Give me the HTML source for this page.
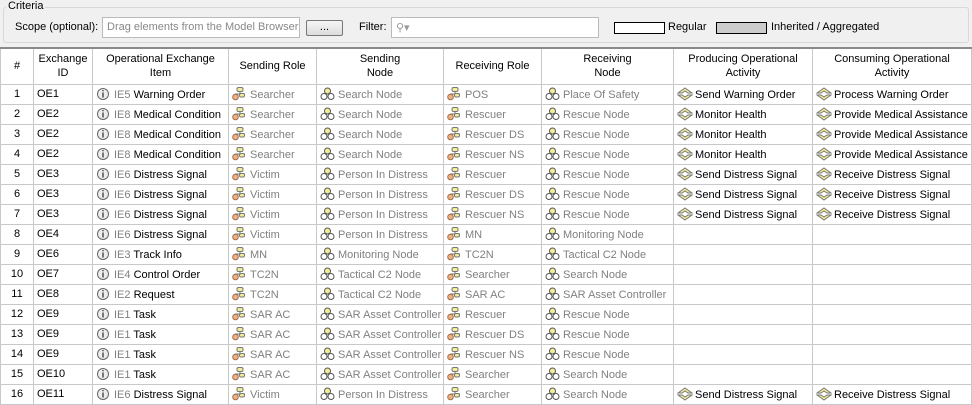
<!DOCTYPE html>
<html><head><style>
*{margin:0;padding:0;box-sizing:border-box}
body{width:972px;height:403px;background:#f0f0f0;font-family:"Liberation Sans",sans-serif;font-size:11px;color:#000;position:relative;overflow:hidden}
.abs{position:absolute;white-space:nowrap}
table{position:absolute;left:0;top:47px;border-collapse:collapse;table-layout:fixed;background:#fff;width:971px}
td,th{border:1px solid #c8c8c8;height:20px;white-space:nowrap;overflow:hidden;padding:0 3px;font-weight:normal;line-height:13px;vertical-align:middle}
th{height:36px;background:#fff;font-size:11px;line-height:14px;text-align:center;border-top:2px solid #8a8a8a}
td.n{text-align:center}
.g{color:#808080}
svg{vertical-align:-3px;margin-right:2px}
</style></head><body>
<div class="abs" style="left:3px;top:7px;width:966px;height:36px;border:1px solid #d8d8d8;border-radius:3px"></div>
<div class="abs" style="left:6px;top:0;background:#f0f0f0;padding:0 2px;line-height:13px">Criteria</div>
<div class="abs" style="left:15px;top:21px">Scope (optional):</div>
<div class="abs" style="left:102px;top:17px;width:198px;height:21px;border:1px solid #bbb;background:#fff;color:#888;padding:3px 4px;overflow:hidden">Drag elements from the Model Browser</div>
<div class="abs" style="left:306px;top:20px;width:37px;height:16px;border:1px solid #777;border-radius:2px;background:linear-gradient(#f6f6f6,#dcdcdc);text-align:center;line-height:13px">...</div>
<div class="abs" style="left:359px;top:21px">Filter:</div>
<div class="abs" style="left:391px;top:17px;width:208px;height:21px;border:1px solid #bbb;background:#fff;color:#999;padding:3px 4px">&#9906;&#9662;</div>
<div class="abs" style="left:614px;top:22px;width:51px;height:12px;border:1px solid #000;background:#fff"></div>
<div class="abs" style="left:668px;top:21px">Regular</div>
<div class="abs" style="left:716px;top:22px;width:51px;height:12px;border:1px solid #000;background:#ccc"></div>
<div class="abs" style="left:771px;top:21px">Inherited / Aggregated</div>
<svg width="0" height="0" style="position:absolute"><defs>
<g id="r"><rect x="5" y="0.5" width="6" height="4" rx="1.5" fill="#f4ee9a" stroke="#777"/><path d="M8 4.5V7M3 7H13" stroke="#777" fill="none"/><rect x="7.5" y="6.5" width="5" height="3.5" rx="1.5" fill="#f4ee9a" stroke="#777"/><circle cx="3.5" cy="10" r="2.8" fill="#f0b080" stroke="#a07050"/></g>
<g id="nd"><circle cx="7.5" cy="4" r="3" fill="#f4ee9a" stroke="#555"/><circle cx="4" cy="9.5" r="3" fill="#fff" stroke="#555"/><circle cx="11" cy="9.5" r="3" fill="#fff" stroke="#555"/></g>
<g id="i"><circle cx="7" cy="7" r="5.5" fill="#eee" stroke="#666"/><path d="M7 5.5V10.5M7 3V4.3" stroke="#444" stroke-width="1.4"/></g>
<g id="a"><path d="M1 6L8 1L15 6H11L8 4L5 6Z" fill="#f4ee9a" stroke="#777"/><path d="M1 8L8 13L15 8H11L8 10L5 8Z" fill="#f4ee9a" stroke="#777"/></g>
</defs></svg>
<table>
<colgroup><col style="width:33px"><col style="width:59px"><col style="width:136px"><col style="width:88px"><col style="width:127px"><col style="width:98px"><col style="width:132px"><col style="width:139px"><col style="width:159px"></colgroup>
<tr><th style="height:36px">#</th><th>Exchange<br>ID</th><th>Operational Exchange<br>Item</th><th>Sending Role</th><th>Sending<br>Node</th><th>Receiving Role</th><th>Receiving<br>Node</th><th>Producing Operational<br>Activity</th><th>Consuming Operational<br>Activity</th></tr>
<script>
const R=[
[1,"OE1","IE5","Warning Order","Searcher","Search Node","POS","Place Of Safety","Send Warning Order","Process Warning Order"],
[2,"OE2","IE8","Medical Condition","Searcher","Search Node","Rescuer","Rescue Node","Monitor Health","Provide Medical Assistance"],
[3,"OE2","IE8","Medical Condition","Searcher","Search Node","Rescuer DS","Rescue Node","Monitor Health","Provide Medical Assistance"],
[4,"OE2","IE8","Medical Condition","Searcher","Search Node","Rescuer NS","Rescue Node","Monitor Health","Provide Medical Assistance"],
[5,"OE3","IE6","Distress Signal","Victim","Person In Distress","Rescuer","Rescue Node","Send Distress Signal","Receive Distress Signal"],
[6,"OE3","IE6","Distress Signal","Victim","Person In Distress","Rescuer DS","Rescue Node","Send Distress Signal","Receive Distress Signal"],
[7,"OE3","IE6","Distress Signal","Victim","Person In Distress","Rescuer NS","Rescue Node","Send Distress Signal","Receive Distress Signal"],
[8,"OE4","IE6","Distress Signal","Victim","Person In Distress","MN","Monitoring Node","",""],
[9,"OE6","IE3","Track Info","MN","Monitoring Node","TC2N","Tactical C2 Node","",""],
[10,"OE7","IE4","Control Order","TC2N","Tactical C2 Node","Searcher","Search Node","",""],
[11,"OE8","IE2","Request","TC2N","Tactical C2 Node","SAR AC","SAR Asset Controller","",""],
[12,"OE9","IE1","Task","SAR AC","SAR Asset Controller","Rescuer","Rescue Node","",""],
[13,"OE9","IE1","Task","SAR AC","SAR Asset Controller","Rescuer DS","Rescue Node","",""],
[14,"OE9","IE1","Task","SAR AC","SAR Asset Controller","Rescuer NS","Rescue Node","",""],
[15,"OE10","IE1","Task","SAR AC","SAR Asset Controller","Searcher","Search Node","",""],
[16,"OE11","IE6","Distress Signal","Victim","Person In Distress","Searcher","Search Node","Send Distress Signal","Receive Distress Signal"]];
const ic=(id)=>`<svg width="16" height="14"><use href="#${id}"/></svg>`;
let h="";
for(const r of R){
h+=`<tr><td class="n">${r[0]}</td><td>${r[1]}</td><td>${ic('i')}<span class="g">${r[2]}</span> ${r[3]}</td><td class="g">${ic('r')}${r[4]}</td><td class="g">${ic('nd')}${r[5]}</td><td class="g">${ic('r')}${r[6]}</td><td class="g">${ic('nd')}${r[7]}</td><td>${r[8]?ic('a')+r[8]:''}</td><td>${r[9]?ic('a')+r[9]:''}</td></tr>`;}
document.write(h);
</script>
</table>
</body></html>
